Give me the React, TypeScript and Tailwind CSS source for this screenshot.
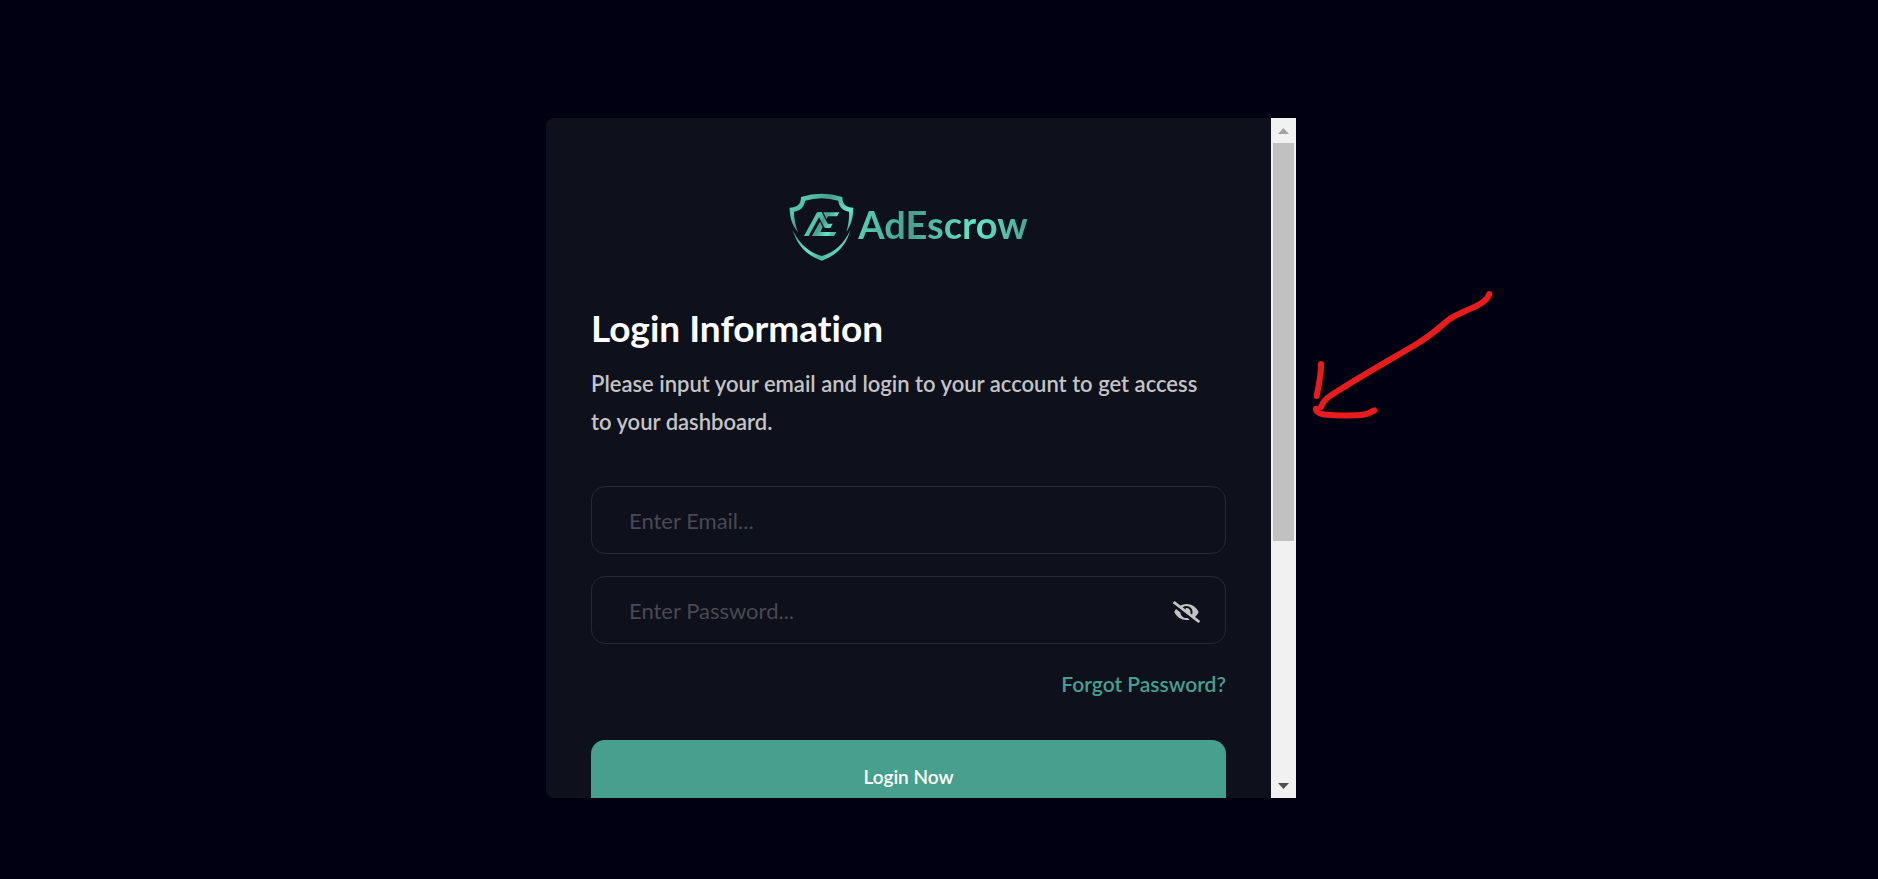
import { useState } from "react";
import { FaEye, FaEyeSlash } from "react-icons/fa";

function ShieldMark() {
  return (
    <svg viewBox="57 39 195 204" className="h-[68px] w-[65px] shrink-0" aria-hidden="true">
      <defs>
        <linearGradient id="shield" x1="59" y1="60" x2="190" y2="190" gradientUnits="userSpaceOnUse" spreadMethod="reflect">
          <stop offset="0" stopColor="#5fdcbd" />
          <stop offset="0.42" stopColor="#46a08d" />
          <stop offset="0.8" stopColor="#65e6c6" />
          <stop offset="1" stopColor="#4db39d" />
        </linearGradient>
        <linearGradient id="letters" x1="110" y1="120" x2="185" y2="165" gradientUnits="userSpaceOnUse">
          <stop offset="0" stopColor="#46a08d" />
          <stop offset="0.25" stopColor="#55c7ac" />
          <stop offset="0.5" stopColor="#46a08d" />
          <stop offset="0.85" stopColor="#65e6c6" />
          <stop offset="1" stopColor="#4fb8a1" />
        </linearGradient>
      </defs>
      <g fill="url(#shield)">
        <path d="M59 83C80 83 93 74 93 51Q155 32 217 51C217 74 229 83 250 83C250 112 243 136 229 156C235 135 238 116 237 95C219 92 206 80 205 62Q155 47 105 62C104 80 91 92 72 95C72 116 76 136 84 156C66 136 59 112 59 83Z" />
        <path d="M68 150C88 193 118 217 155 228C192 217 222 193 241 150C229 197 198 227 155 242C112 227 81 197 68 150Z" />
      </g>
      <g fill="url(#letters)">
        <path d="M102 168L139 100Q141 96 146 96H155L173 131H188L181 144H168Q164 144 162 140L147 112L116 168Z" />
        <path d="M160 97H208L201 109H174L170 117Z" />
        <path d="M126 168L150 125L158 141L151 156H199L192 168Z" />
      </g>
    </svg>
  );
}

function HandDrawnArrow() {
  return (
    <svg
      viewBox="18 0 600 450"
      className="pointer-events-none absolute left-full top-[162px] h-[150px] w-[200px]"
      fill="none"
      stroke="#e81c1c"
      strokeWidth="18"
      strokeLinecap="round"
      strokeLinejoin="round"
      aria-hidden="true"
    >
      <path d="M598 42C587 76 528 87 482 115C460 130 434 161 370 198C290 245 190 302 120 348C105 358 97 370 93 381" />
      <path d="M93 252C93 290 88 308 80 348" />
      <path d="M78 386C78 408 130 407 200 406C225 406 235 400 253 391" />
    </svg>
  );
}

function ScrollTrack() {
  return (
    <div className="flex w-[25px] shrink-0 flex-col bg-[#f1f1f1]" aria-hidden="true">
      <div className="flex h-[25px] items-center justify-center">
        <svg viewBox="0 0 11 6" className="h-[6px] w-[11px]" fill="#a3a3a3">
          <path d="M0 6L5.5 0L11 6Z" />
        </svg>
      </div>
      <div className="flex-1 px-[2px]">
        <div className="h-[398px] bg-[#c1c1c1]" />
      </div>
      <div className="flex h-[25px] items-center justify-center">
        <svg viewBox="0 0 11 6" className="h-[6px] w-[11px]" fill="#505050">
          <path d="M0 0H11L5.5 6Z" />
        </svg>
      </div>
    </div>
  );
}

const field =
  "h-[68px] w-full rounded-[14px] border border-[#262731] bg-transparent pl-[37px] pr-16 text-[22px] text-[#c4c4c4] outline-none placeholder:text-[#484952]";

export default function App() {
  const [visible, setVisible] = useState(false);

  return (
    <main className="flex min-h-screen items-center justify-center bg-[#000012] pr-9 pt-[37px] font-['Lato','Open_Sans',sans-serif] [font-variant-ligatures:none]">
      <div className="relative w-full max-w-[750px]">
        <div className="flex h-[680px] overflow-hidden rounded-l-lg bg-[#0e101c]">
          <div className="flex-1 overflow-y-auto px-[45px] pb-[45px] pt-[75px] [scrollbar-width:none]">
            <div className="flex items-center justify-center gap-1">
              <ShieldMark />
              <span className="bg-[linear-gradient(100deg,#5ad3b5_0%,#46a08d_32%,#65e6c6_68%,#46a08d_100%)] bg-clip-text pb-[6px] text-[38px] font-bold leading-[52px] text-transparent">
                AdEscrow
              </span>
            </div>

            <h1 className="mt-11 text-[37px] font-bold leading-[46px] text-white">Login Information</h1>
            <p className="mt-[14px] pr-4 text-[22px] font-semibold leading-[38px] text-[#c4c4c4]">
              Please input your email and login to your account to get access to your dashboard.
            </p>

            <form className="mt-[45px]" onSubmit={(e) => e.preventDefault()}>
              <input type="email" aria-label="Email" placeholder="Enter Email..." className={field} />
              <div className="relative mt-[22px]">
                <input
                  type={visible ? "text" : "password"}
                  aria-label="Password"
                  placeholder="Enter Password..."
                  className={field}
                />
                <button
                  type="button"
                  aria-label={visible ? "Hide password" : "Show password"}
                  onClick={() => setVisible(!visible)}
                  className="absolute inset-y-0 right-[26px] flex items-center pt-1 text-[#c4c4c4]"
                >
                  {visible ? <FaEye className="h-[22px] w-[27px]" /> : <FaEyeSlash className="h-[22px] w-[27px]" />}
                </button>
              </div>
              <div className="mt-6 flex justify-end">
                <a href="#forgot" className="text-[21px] font-semibold leading-8 text-[#46a08d]">
                  Forgot Password?
                </a>
              </div>
              <button type="submit" className="mt-10 h-[74px] w-full rounded-[14px] bg-[#46a08d] text-[19px] font-semibold text-white">
                Login Now
              </button>
            </form>
          </div>
          <ScrollTrack />
        </div>
        <HandDrawnArrow />
      </div>
    </main>
  );
}
